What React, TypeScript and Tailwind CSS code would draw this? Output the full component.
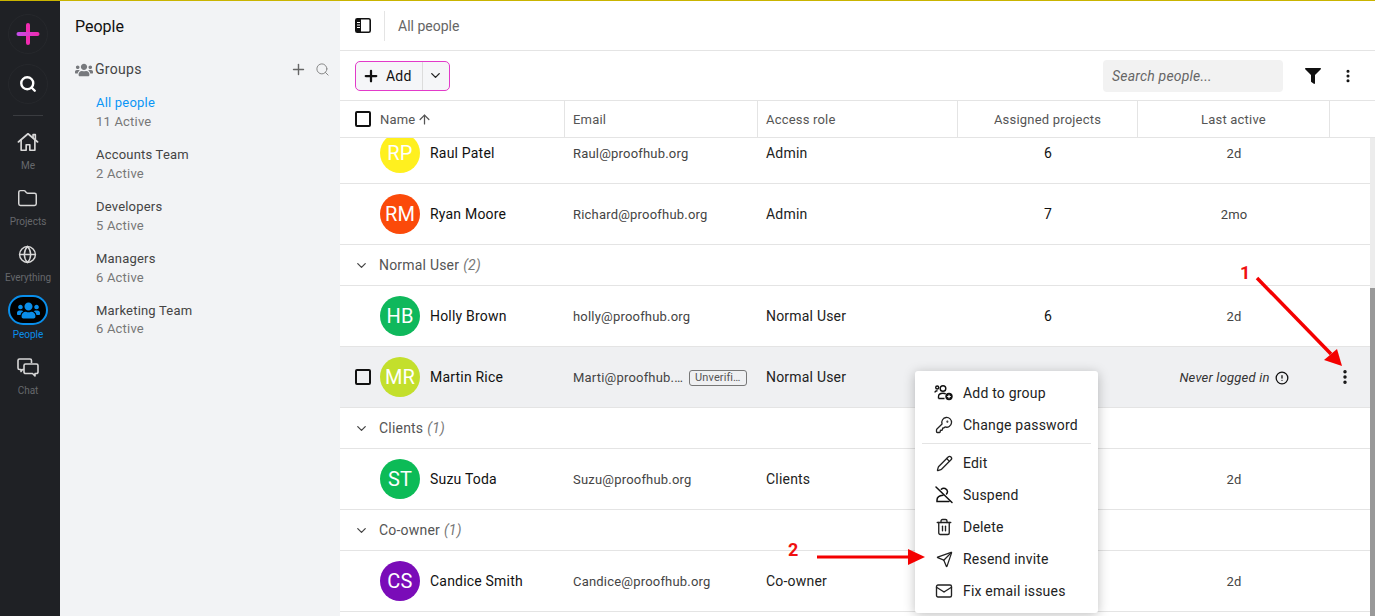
import React from 'react'
import { ArrowUp, ChevronDown, CircleAlert, EllipsisVertical, Folder, Globe, KeyRound, Mail, Pencil, Plus, Search, Send, Trash2 } from 'lucide-react'
import { FaUsers, FaFilter } from 'react-icons/fa'

const HomeIcon = () => (
  <svg width="22" height="22" viewBox="0 0 24 24" fill="none" stroke="currentColor" strokeWidth="1.8" strokeLinejoin="round" strokeLinecap="round">
    <path d="M1.5 12 12 3l10.5 9" />
    <path d="M17.5 7V4H20v5" />
    <path d="M4.5 10v11h5.5v-6h4v6h5.5V10" />
  </svg>
)

const ChatIcon = () => (
  <svg width="22" height="20" viewBox="0 0 22 20" fill="none" stroke="currentColor" strokeWidth="1.6" strokeLinejoin="round">
    <path d="M2.5 1h10.5a1.5 1.5 0 0 1 1.5 1.5V5M7 11.5H5.5L4 13.5v-2H2.5A1.5 1.5 0 0 1 1 10V2.5A1.5 1.5 0 0 1 2.5 1" />
    <path d="M8.5 6h11A1.5 1.5 0 0 1 21 7.500V14a1.500 1.500 0 0 1-1.500 1.500H18v2.500l-2.500-2.500h-7A1.500 1.500 0 0 1 7 14V7.500A1.500 1.500 0 0 1 8.500 6Z" />
  </svg>
)

const railItems = [
  { label: 'Me', icon: <HomeIcon /> },
  { label: 'Projects', icon: <Folder size={21} strokeWidth={1.7} /> },
  { label: 'Everything', icon: <Globe size={19} strokeWidth={1.8} /> },
]

const groups = [
  { name: 'Accounts Team', count: '2 Active' },
  { name: 'Developers', count: '5 Active' },
  { name: 'Managers', count: '6 Active' },
  { name: 'Marketing Team', count: '6 Active' },
]

const cols = 'grid grid-cols-[225px_193px_200px_180px_192px_1fr]'

type Person = {
  initials: string
  color: string
  name: string
  email: string
  role: string
  projects?: string
  last?: string
}

const Row = ({ p, active }: { p: Person; active?: boolean }) => (
  <div className={`${cols} h-[61px] items-center border-b border-[#e4e4e4] text-[14px] tracking-[0.2px] ${active ? 'bg-[#eff0f2]' : 'bg-white'}`}>
    <div className="flex items-center pl-[15px]">
      {active ? (
        <div className="h-4 w-4 rounded-[2px] border-2 border-[#111]" />
      ) : (
        <div className="h-4 w-4" />
      )}
      <div className={`ml-[9px] flex h-10 w-10 items-center justify-center rounded-full text-[20px] text-white ${p.color}`}>
        {p.initials}
      </div>
      <span className="ml-[10px] text-[#111]">{p.name}</span>
    </div>
    <div className="flex items-center pl-2 pt-[2px] text-[13px] text-[#444]">
      {p.email}
      {active && (
        <span className="ml-[6px] rounded-[3px] border border-[#777] px-[5px] text-[11px] leading-[14px] tracking-[0.1px] text-[#555]">
          Unverifi…
        </span>
      )}
    </div>
    <div className="pl-2 text-[#222]">{p.role}</div>
    <div className="text-center text-[#111]">{p.projects}</div>
    <div className="pt-[2px] text-center text-[13px] text-[#444]">
      {active ? (
        <span className="flex items-center justify-center gap-[5px] italic text-[#333]">
          Never logged in <CircleAlert size={14} strokeWidth={2.2} color="#111" />
        </span>
      ) : (
        p.last
      )}
    </div>
    <div className="flex justify-end pr-[21px]">
      {active && <EllipsisVertical size={18} strokeWidth={2.6} color="#111" />}
    </div>
  </div>
)

const GroupRow = ({ name, count }: { name: string; count: string }) => (
  <div className="flex h-[41px] items-center border-b border-[#e4e4e4] bg-white pl-[14px] text-[14px] tracking-[0.2px] text-[#555]">
    <ChevronDown size={15} strokeWidth={2} color="#444" />
    <span className="ml-[10px]">{name}</span>
    <span className="ml-1 italic text-[#777]">({count})</span>
  </div>
)

const AddToGroupIcon = () => (
  <svg width="20" height="20" viewBox="0 0 20 20" fill="none" stroke="#111" strokeWidth="1.4">
    <circle cx="9" cy="5.500" r="2.800" />
    <circle cx="3.200" cy="4.500" r="1.500" />
    <path d="M1 9.500c0-1 1-1.800 2.500-1.800M4.500 15.500v-1.800c0-2 2-3.400 4.500-3.400 1 0 2 .2 2.700.6M4.500 15.500h6" />
    <circle cx="15" cy="13.500" r="3.700" fill="#111" stroke="none" />
    <path d="M13.200 13.500h3.600M15 11.700v3.600" stroke="#fff" strokeWidth="1.200" />
  </svg>
)

const SuspendIcon = () => (
  <svg width="20" height="20" viewBox="0 0 20 20" fill="none" stroke="#111" strokeWidth="1.5" strokeLinecap="round">
    <path d="M2 2l16 15.500" />
    <path d="M7.300 4.200A3.700 3.700 0 0 1 13.500 6.500c0 1-.4 1.900-1 2.500" />
    <path d="M9 10.300c-3.500.3-6 2.200-6 4.700v1.500h12" />
  </svg>
)

const menuTop = [
  { label: 'Add to group', icon: <AddToGroupIcon /> },
  { label: 'Change password', icon: <KeyRound size={18} strokeWidth={1.7} /> },
]

const menuBottom = [
  { label: 'Edit', icon: <Pencil size={17} strokeWidth={1.8} /> },
  { label: 'Suspend', icon: <SuspendIcon /> },
  { label: 'Delete', icon: <Trash2 size={18} strokeWidth={1.8} /> },
  { label: 'Resend invite', icon: <Send size={17} strokeWidth={1.8} /> },
  { label: 'Fix email issues', icon: <Mail size={18} strokeWidth={1.8} /> },
]

const MenuItem = ({ label, icon }: { label: string; icon: React.ReactNode }) => (
  <div className="flex h-8 items-center pl-[19px] text-[14px] tracking-[0.2px] text-[#222]">
    <span className="flex w-[20px] justify-center">{icon}</span>
    <span className="ml-[9px]">{label}</span>
  </div>
)

export default function App() {
  return (
    <div className="flex h-[616px] w-[1375px] flex-col overflow-hidden bg-white font-['Roboto',sans-serif]">
      <div className="h-px shrink-0 bg-[#c9b400]" />
      <div className="relative flex min-h-0 flex-1">
        {/* RAIL */}
        <aside className="flex w-[60px] shrink-0 flex-col items-center bg-[#1f2125] pr-[4px]">
          <div className="mt-[13px] flex h-10 w-10 items-center justify-center rounded-full border border-[#26282c]">
            <svg width="24" height="24" viewBox="0 0 24 24">
              <defs>
                <linearGradient id="railPlus" gradientUnits="userSpaceOnUse" x1="2" x2="22" y1="12" y2="12">
                  <stop offset="0" stopColor="#c44de8" />
                  <stop offset="1" stopColor="#f02bb0" />
                </linearGradient>
              </defs>
              <path d="M12 3v18" stroke="#f02bb0" strokeWidth="4" strokeLinecap="round" />
              <path d="M2.500 12h19" stroke="url(#railPlus)" strokeWidth="4" strokeLinecap="round" />
            </svg>
          </div>
          <div className="mt-[10px] flex h-10 w-10 items-center justify-center rounded-full border border-[#26282c]">
            <Search size={18} strokeWidth={3.2} color="#fff" />
          </div>
          <div className="mt-[11px] h-px w-[30px] bg-[#3a3c40]" />
          <div className="mt-[14px] flex flex-col items-center">
            {railItems.map((item) => (
              <div key={item.label} className="flex h-[56px] w-full flex-col items-center text-[#d8d8d8]">
                <div className="flex h-[24px] items-center">{item.icon}</div>
                <span className="mt-[6px] text-[10px] leading-[12px] text-[#66686c]">{item.label}</span>
              </div>
            ))}
          </div>
          <div className="-mt-[3px] flex h-[30px] w-10 items-center justify-center rounded-[15px] border-2 border-[#0a8eea] bg-black">
            <FaUsers size={23} color="#0a8eea" />
          </div>
          <span className="mt-[4px] text-[10px] leading-[12px] text-[#0a8eea]">People</span>
          <div className="mt-[17px] text-[#d8d8d8]">
            <ChatIcon />
          </div>
          <span className="mt-[7px] text-[10px] leading-[12px] text-[#66686c]">Chat</span>
        </aside>

        {/* GROUPS PANEL */}
        <aside className="w-[280px] shrink-0 bg-[#f2f3f5]">
          <h1 className="pl-[15px] pt-[16px] text-[16px] leading-5 text-[#111]">People</h1>
          <div className="mt-[22px] flex items-center pl-[15px] pr-[10px]">
            <FaUsers size={18} color="#77797d" />
            <span className="ml-[2px] text-[14px] tracking-[0.3px] text-[#444]">Groups</span>
            <Plus size={17} strokeWidth={2} color="#666" className="ml-auto" />
            <Search size={15} strokeWidth={1.6} color="#888" className="ml-[8px]" />
          </div>
          <div className="mt-[13px] pl-[36px] text-[13px] tracking-[0.2px]">
            <div className="h-[52px]">
              <div className="leading-[19px] text-[#0a96f5]">All people</div>
              <div className="leading-[19px] text-[#777]">11 Active</div>
            </div>
            {groups.map((g, i) => (
              <div key={g.name} className="h-[52px]">
                <div className="leading-[19px] text-[#444]">{g.name}</div>
                <div className={`leading-[19px] text-[#777] ${i === groups.length - 1 ? '-mt-px' : ''}`}>{g.count}</div>
              </div>
            ))}
          </div>
        </aside>

        {/* MAIN */}
        <main className="flex min-w-0 flex-1 flex-col">
          <div className="flex h-[50px] shrink-0 items-center border-b border-[#e4e4e4] pl-[15px]">
            <svg width="16" height="15" viewBox="0 0 16 15" fill="none">
              <rect x="0.800" y="0.800" width="14.400" height="13.400" rx="1.500" stroke="#111" strokeWidth="1.600" />
              <rect x="1" y="1" width="5" height="13" fill="#111" />
              <path d="M2 4.500h3M2 7h3M2 9.500h3" stroke="#fff" strokeWidth="1" />
            </svg>
            <div className="ml-[13px] h-[30px] w-px bg-[#e4e4e4]" />
            <span className="ml-[13px] pt-[2px] text-[14px] text-[#666]">All people</span>
          </div>

          <div className="flex h-[50px] shrink-0 items-center border-b border-[#e4e4e4] pl-[15px] pr-[19px]">
            <div className="flex h-[30px] w-[95px] items-center rounded-[5px] border border-[#e23ac9] bg-[#f5f6f8]">
              <div className="flex h-full w-[67px] items-center border-r border-[#dcdcdc] pl-[6px]">
                <Plus size={18} strokeWidth={3} color="#111" />
                <span className="ml-[6px] pt-[2px] text-[14px] tracking-[0.2px] text-[#111]">Add</span>
              </div>
              <ChevronDown size={15} strokeWidth={2.2} color="#222" className="ml-[5px]" />
            </div>
            <div className="ml-auto flex h-8 w-[180px] items-center rounded-[4px] bg-[#f2f2f2] pl-[9px] pt-[2px] text-[14px] italic tracking-[0.2px] text-[#666]">
              Search people...
            </div>
            <FaFilter size={16} color="#111" className="ml-[22px]" />
            <EllipsisVertical size={16} strokeWidth={2.6} color="#111" className="ml-[19px]" />
          </div>

          <div className={`${cols} h-[37px] shrink-0 items-stretch border-b border-[#e4e4e4] text-[13px] tracking-[0.2px] text-[#555]`}>
            <div className="flex items-center border-r border-[#e4e4e4] pl-[15px]">
              <div className="h-4 w-4 rounded-[2px] border-2 border-[#111]" />
              <span className="ml-[9px] pt-[2px]">Name</span>
              <ArrowUp size={15} strokeWidth={2} className="ml-[2px]" />
            </div>
            <div className="flex items-center border-r border-[#e4e4e4] pl-2 pt-[2px]">Email</div>
            <div className="flex items-center border-r border-[#e4e4e4] pl-2 pt-[2px]">Access role</div>
            <div className="flex items-center justify-center border-r border-[#e4e4e4] pt-[2px]">Assigned projects</div>
            <div className="flex items-center justify-center border-r border-[#e4e4e4] pt-[2px]">Last active</div>
            <div />
          </div>

          {/* scrolled list, first row cut off under the header */}
          <div className="relative min-h-0 flex-1 overflow-hidden">
            <div className="-mt-[15px]">
              <Row p={{ initials: 'RP', color: 'bg-[#fff01f]', name: 'Raul Patel', email: 'Raul@proofhub.org', role: 'Admin', projects: '6', last: '2d' }} />
              <Row p={{ initials: 'RM', color: 'bg-[#fb4a0a]', name: 'Ryan Moore', email: 'Richard@proofhub.org', role: 'Admin', projects: '7', last: '2mo' }} />
              <GroupRow name="Normal User" count="2" />
              <Row p={{ initials: 'HB', color: 'bg-[#0fb85c]', name: 'Holly Brown', email: 'holly@proofhub.org', role: 'Normal User', projects: '6', last: '2d' }} />
              <Row active p={{ initials: 'MR', color: 'bg-[#c3df2c]', name: 'Martin Rice', email: 'Marti@proofhub.…', role: 'Normal User' }} />
              <GroupRow name="Clients" count="1" />
              <Row p={{ initials: 'ST', color: 'bg-[#0cbb57]', name: 'Suzu Toda', email: 'Suzu@proofhub.org', role: 'Clients', last: '2d' }} />
              <GroupRow name="Co-owner" count="1" />
              <Row p={{ initials: 'CS', color: 'bg-[#7a0cb8]', name: 'Candice Smith', email: 'Candice@proofhub.org', role: 'Co-owner', last: '2d' }} />
            </div>
            {/* scrollbar */}
            <div className="absolute bottom-0 right-0 top-0 flex w-[5px] flex-col bg-[#ececec]">
              <div className="mt-[150px] flex-1 bg-[#999]" />
            </div>
          </div>
        </main>

        {/* ROW MENU */}
        <div className="absolute left-[915px] top-[370px] w-[183px] rounded-[3px] bg-white py-[6px] shadow-[0_2px_12px_rgba(0,0,0,0.25)]">
          {menuTop.map((m) => (
            <MenuItem key={m.label} {...m} />
          ))}
          <div className="mx-[7px] mb-[3px] mt-[2px] h-px bg-[#e4e4e4]" />
          {menuBottom.map((m) => (
            <MenuItem key={m.label} {...m} />
          ))}
        </div>

        {/* ANNOTATIONS */}
        <span className="absolute left-[1240px] top-[262px] text-[18px] font-bold leading-5 text-[#f01010]">1</span>
        <span className="absolute left-[788px] top-[539px] text-[18px] font-bold leading-5 text-[#f01010]">2</span>
        <svg className="pointer-events-none absolute left-0 top-0" width="1375" height="615" viewBox="0 1 1375 615">
          <path d="M1257 278L1331 354" stroke="#f40000" strokeWidth="3.5" />
          <path d="M1342 366L1324 360L1337 349Z" fill="#f40000" />
          <path d="M817 557H910" stroke="#f40000" strokeWidth="3" />
          <path d="M925 557L908 549V565Z" fill="#f40000" />
        </svg>
      </div>
    </div>
  )
}
